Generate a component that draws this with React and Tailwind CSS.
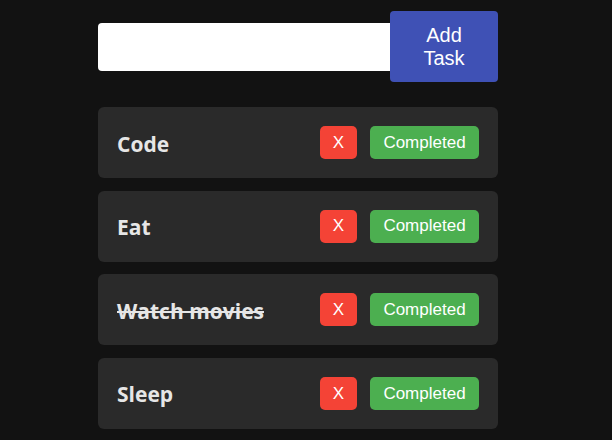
import React from 'react'

const tasks = [
    { name: 'Code', done: false },
    { name: 'Eat', done: false },
    { name: 'Watch movies', done: true },
    { name: 'Sleep', done: false },
]

function TaskRow({ name, done }) {
    return (
        <div className="flex items-center justify-between h-[71px] px-[19px] bg-[#2a2a2a] rounded-md">
            <span
                className={`text-[21px] font-bold text-[#e6e6e6] leading-[28px] mt-[2px] ${done ? 'line-through' : ''}`}
                style={{ fontFamily: '"Open Sans", "Noto Sans", sans-serif' }}
            >
                {name}
            </span>
            <div className="flex items-center gap-[13px]" style={{ fontFamily: '"Liberation Sans", Arial, sans-serif' }}>
                <button className="h-[33px] w-[37px] bg-[#f44336] text-white text-[17px] rounded-[5px]">X</button>
                <button className="h-[33px] w-[109px] bg-[#4caf50] text-white text-[17px] rounded-[5px]">Completed</button>
            </div>
        </div>
    )
}

export default function App() {
    return (
        <div className="min-h-[440px] w-full bg-[#121212]">
            <div className="w-[400px] ml-[98px] pt-[11px]">
                <div className="flex items-center">
                    <input type="text" className="flex-1 h-[48px] bg-white rounded-l outline-none px-3" />
                    <button
                        className="w-[108px] h-[71px] bg-[#3f51b5] text-white text-[20px] leading-[23px] rounded px-5"
                        style={{ fontFamily: '"Liberation Sans", Arial, sans-serif' }}
                    >
                        Add Task
                    </button>
                </div>
                <div className="flex flex-col gap-[12.67px] mt-[25px]">
                    {tasks.map((t) => (
                        <TaskRow key={t.name} name={t.name} done={t.done} />
                    ))}
                </div>
            </div>
        </div>
    )
}
